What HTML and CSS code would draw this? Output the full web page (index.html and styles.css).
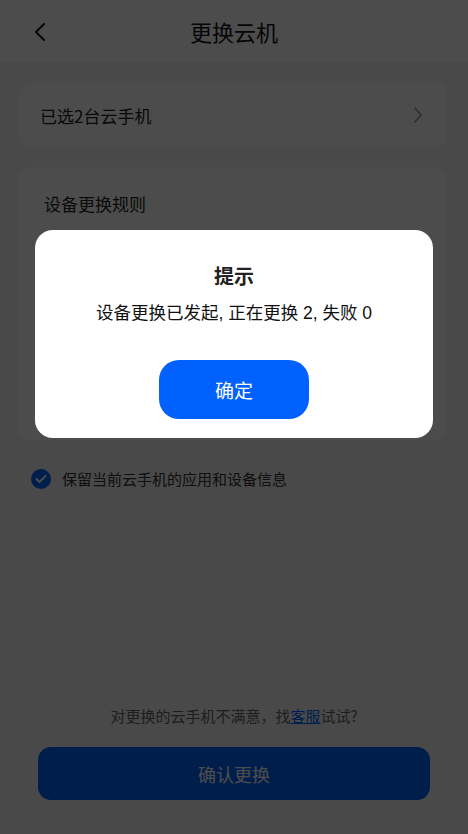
FILE: index.html
```html
<!DOCTYPE html>
<html lang="zh-CN">
<head>
    <meta charset="UTF-8">
    <meta name="viewport" content="width=device-width, initial-scale=1.0">
    <title>更换云机</title>
    <link rel="stylesheet" href="styles.css">
</head>
<body>
    <div class="page">
        <header class="nav">
            <span class="nav-back">
                <svg width="14" height="20" viewBox="0 0 14 20"><path d="M11 2 L3 10 L11 18" fill="none" stroke="#111" stroke-width="2" stroke-linecap="round" stroke-linejoin="round"/></svg>
            </span>
            <h1>更换云机</h1>
        </header>

        <main class="content">
            <div class="card select-row">
                <span>已选2台云手机</span>
                <svg width="10" height="18" viewBox="0 0 10 18"><path d="M2 2 L8 9 L2 16" fill="none" stroke="#999" stroke-width="1.6" stroke-linecap="round" stroke-linejoin="round"/></svg>
            </div>

            <div class="card rules">
                <h2>设备更换规则</h2>
            </div>

            <label class="keep">
                <span class="check">
                    <svg width="12" height="10" viewBox="0 0 12 10"><path d="M1.5 5 L4.5 8 L10.5 2" fill="none" stroke="#fff" stroke-width="1.8" stroke-linecap="round" stroke-linejoin="round"/></svg>
                </span>
                保留当前云手机的应用和设备信息
            </label>
        </main>

        <footer class="footer">
            <p class="hint">对更换的云手机不满意，找<a href="#">客服</a>试试?</p>
            <button class="btn-primary">确认更换</button>
        </footer>
    </div>

    <div class="mask">
        <div class="dialog">
            <h3>提示</h3>
            <p>设备更换已发起, 正在更换 2, 失败 0</p>
            <button class="btn-ok">确定</button>
        </div>
    </div>
</body>
</html>
```

FILE: styles.css
```css
body {
    margin: 0;
    font-family: "Noto Sans CJK SC", "Liberation Sans", sans-serif;
    background-color: #f4f5f7;
    color: #222;
}

.page {
    min-height: 834px;
    display: flex;
    flex-direction: column;
}

.nav {
    height: 62px;
    background: #fff;
    display: flex;
    align-items: center;
    justify-content: center;
    position: relative;
}

.nav-back {
    position: absolute;
    left: 33px;
    top: 22px;
    display: flex;
}

.nav h1 {
    margin: 0;
    font-size: 22px;
    font-weight: 400;
    color: #111;
}

.content {
    padding: 21px 21px 0 19px;
    flex: 1;
}

.card {
    background: #fff;
    border-radius: 12px;
}

.select-row {
    height: 64px;
    padding: 0 24px 0 21px;
    display: flex;
    align-items: center;
    justify-content: space-between;
    font-size: 17px;
    color: #222;
}

.rules {
    margin-top: 20px;
    height: 273px;
    padding: 24px 25px 0;
    box-sizing: border-box;
}

.rules h2 {
    margin: 0;
    font-size: 17px;
    font-weight: 400;
    color: #222;
}

.keep {
    margin-top: 28px;
    padding-left: 12px;
    display: flex;
    align-items: center;
    gap: 11px;
    font-size: 15px;
    color: #333;
}

.check {
    width: 20px;
    height: 20px;
    border-radius: 50%;
    background: #0066ff;
    display: flex;
    align-items: center;
    justify-content: center;
}

.footer {
    padding: 0 38px 34px;
    text-align: center;
}

.hint {
    margin: 0 0 21px;
    font-size: 15px;
    color: #666;
}

.hint a {
    color: #0066ff;
}

.btn-primary {
    width: 100%;
    height: 53px;
    border: 0;
    border-radius: 13px;
    background: #0066ff;
    color: #fff;
    font-family: inherit;
    font-size: 18px;
}

.mask {
    position: fixed;
    inset: 0;
    background: rgba(0, 0, 0, 0.7);
    display: flex;
    justify-content: center;
    align-items: flex-start;
}

.dialog {
    margin-top: 230px;
    width: 398px;
    height: 208px;
    background: #fff;
    border-radius: 18px;
    text-align: center;
    box-sizing: border-box;
    padding-top: 33px;
}

.dialog h3 {
    margin: 0;
    font-size: 20px;
    font-weight: 700;
    color: #222;
    line-height: 26px;
}

.dialog p {
    margin: 12px 0 0;
    font-family: "Liberation Sans", "Noto Sans CJK SC", sans-serif;
    font-size: 17.5px;
    color: #111;
    line-height: 24px;
}

.btn-ok {
    margin-top: 35px;
    width: 150px;
    height: 59px;
    border: 0;
    border-radius: 20px;
    background: #0061fe;
    color: #fff;
    font-family: inherit;
    font-size: 19px;
}
```
